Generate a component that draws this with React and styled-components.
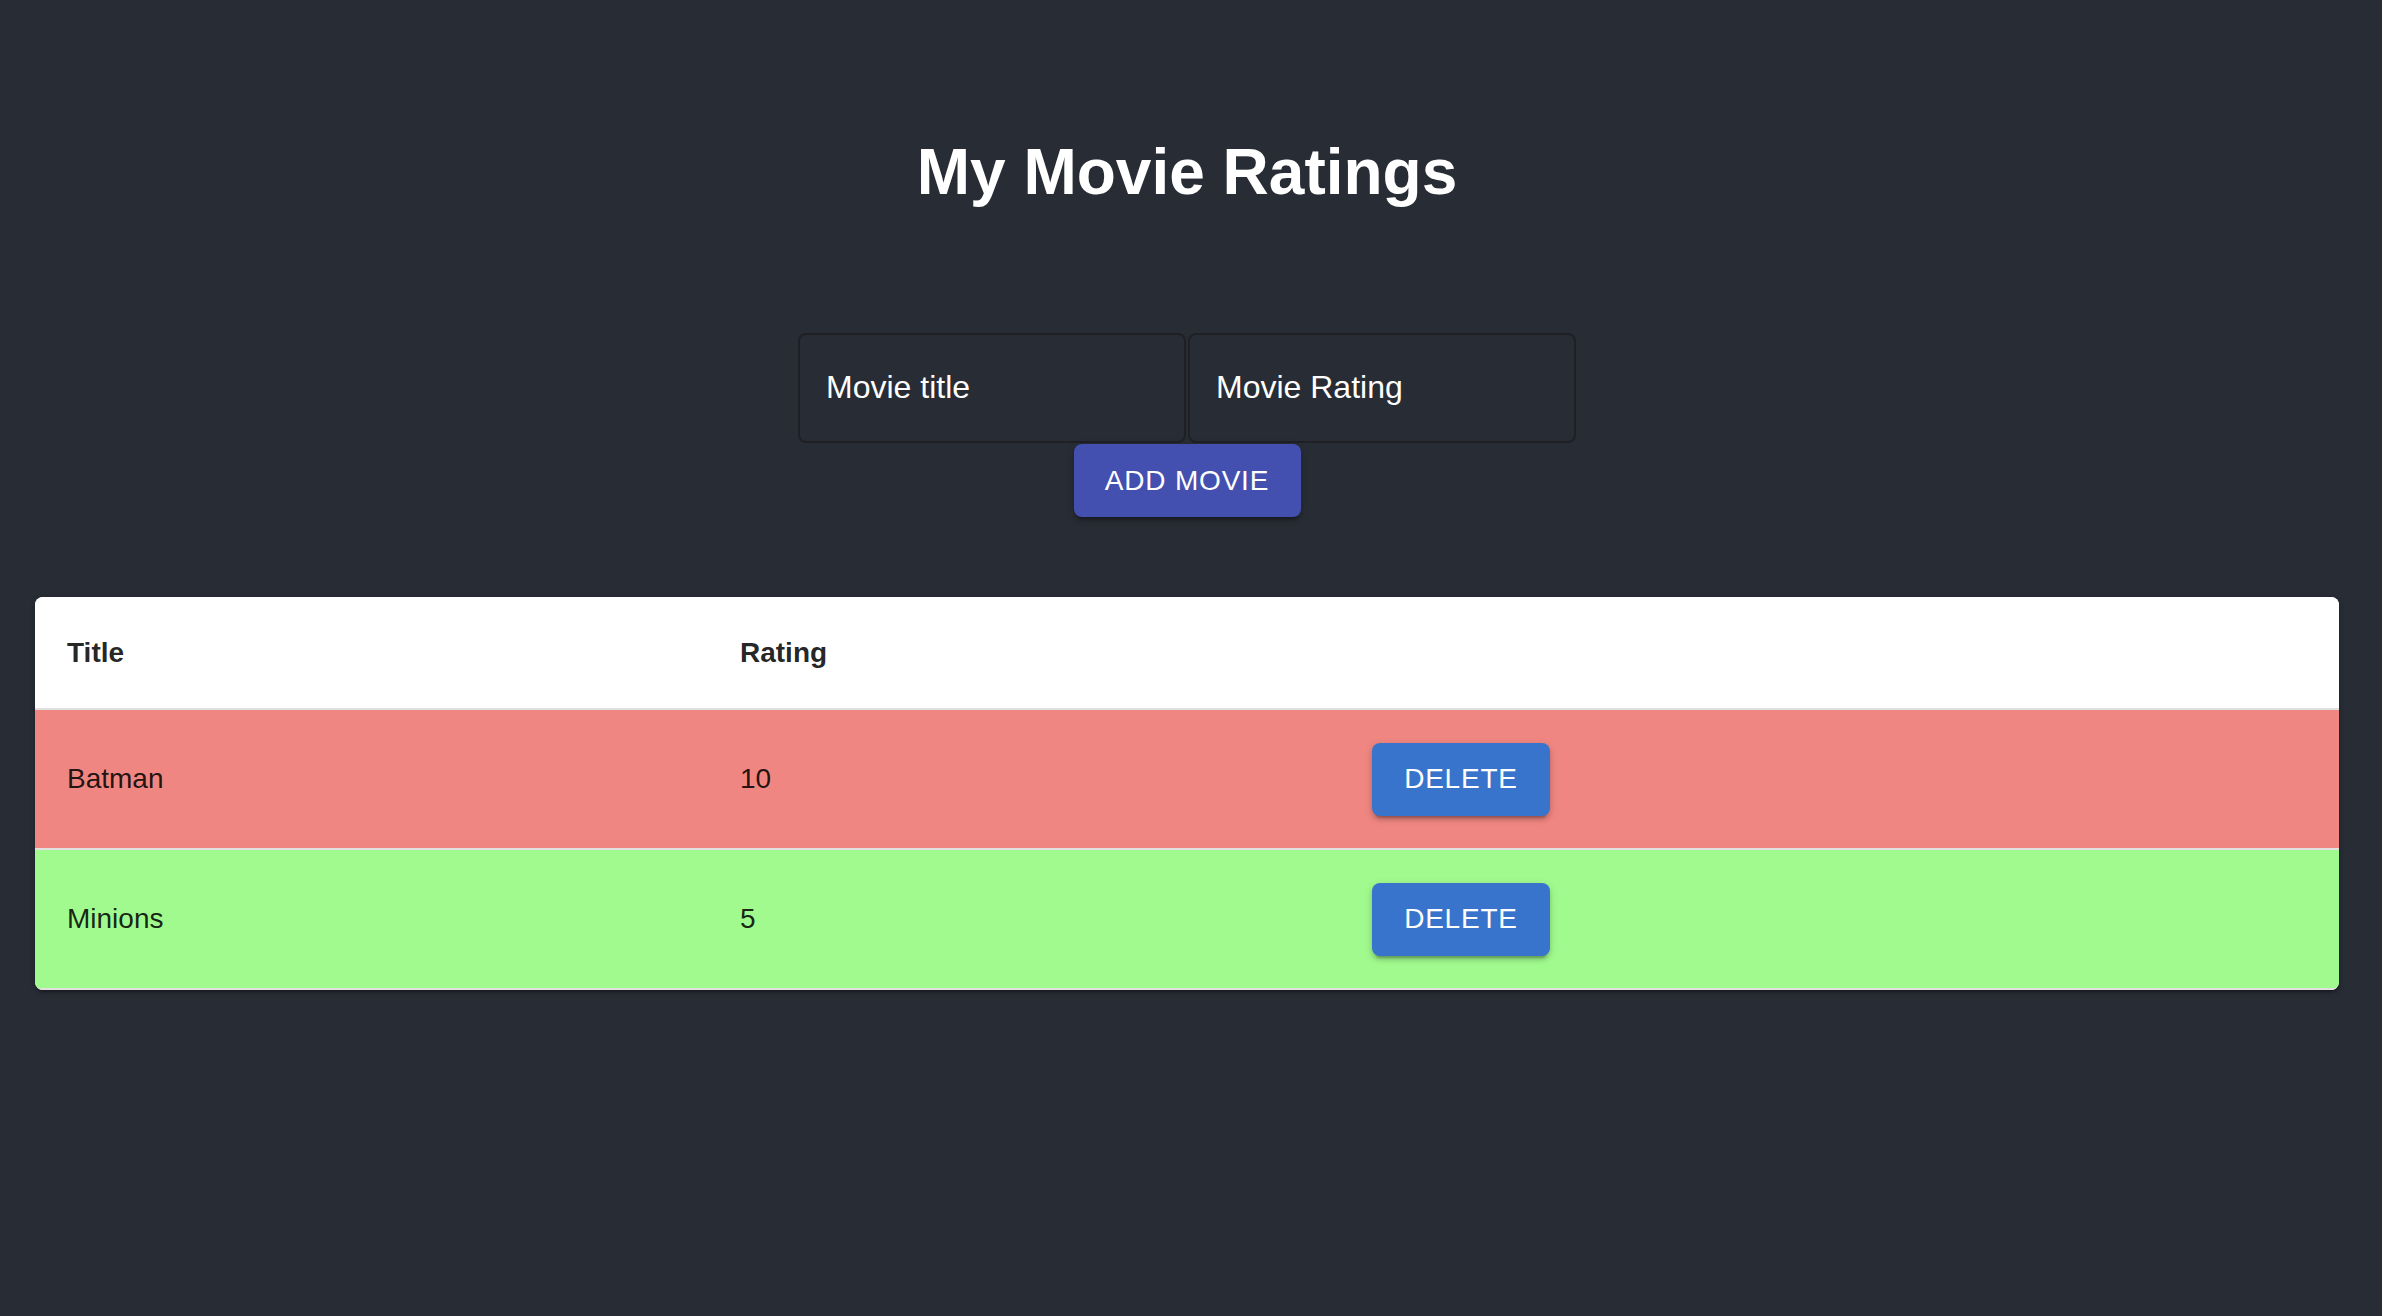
import React, {useState} from 'react';
import styled, {createGlobalStyle} from 'styled-components';

const GlobalStyle = createGlobalStyle`
body {
  margin: 0;
  background: #282c34;
  font-family: "Liberation Sans", Arial, Helvetica, sans-serif;
}
`

const Page = styled.div`
min-height: 100vh;
padding: 135px 43px 0 35px;
box-sizing: border-box;
display: flex;
flex-direction: column;
align-items: center;
`

const Heading = styled.h1`
margin: 0;
color: #ffffff;
font-size: 64px;
font-weight: 700;
line-height: 74px;
`

const Form = styled.form`
margin-top: 124px;
display: flex;
flex-direction: column;
align-items: center;
`

const Fields = styled.div`
display: flex;
gap: 2px;
`

const Field = styled.input`
width: 388px;
height: 110px;
box-sizing: border-box;
padding: 0 26px 2px;
background: transparent;
border: 2px solid #1e2026;
border-radius: 8px;
color: #ffffff;
font-family: inherit;
font-size: 32px;
outline: none;
&::placeholder {
  color: #ffffff;
  opacity: 1;
}
`

const Button = styled.button`
height: 73px;
width: ${p => p.$w}px;
margin-top: ${p => p.$mt || 0}px;
border: none;
border-radius: 8px;
background: ${p => p.$bg};
color: #ffffff;
font-family: inherit;
font-size: 28px;
letter-spacing: 0.8px;
text-transform: uppercase;
cursor: pointer;
box-shadow: 0 6px 2px -4px rgba(0,0,0,0.2), 0 4px 4px 0 rgba(0,0,0,0.14), 0 2px 10px 0 rgba(0,0,0,0.12);
`

const Paper = styled.div`
align-self: stretch;
margin-top: 80px;
background: #ffffff;
border-radius: 8px;
overflow: hidden;
box-shadow: 0 4px 2px -2px rgba(0,0,0,0.2), 0 2px 4px 0 rgba(0,0,0,0.14), 0 2px 6px 0 rgba(0,0,0,0.12);
`

const Table = styled.table`
width: 100%;
border-collapse: collapse;
table-layout: fixed;
`

const Row = styled.tr`
background: ${p => p.$bg || '#ffffff'};
`

const HeadCell = styled.th`
height: 111px;
padding: 0 32px;
text-align: left;
font-size: 28px;
font-weight: 700;
color: rgba(0,0,0,0.87);
border-bottom: 2px solid #e0e0e0;
`

const Cell = styled.td`
height: 138px;
padding: 0 32px;
font-size: 28px;
color: rgba(0,0,0,0.87);
border-bottom: 2px solid #e0e0e0;
`

const rowColor = rating => (rating > 7 ? '#ef8681' : '#a1fa8e');

export default function App() {
  const [movies, setMovies] = useState([
    {title: 'Batman', rating: 10},
    {title: 'Minions', rating: 5},
  ]);
  const [title, setTitle] = useState('');
  const [rating, setRating] = useState('');

  const addMovie = e => {
    e.preventDefault();
    if (!title || !rating) return;
    setMovies([...movies, {title, rating: Number(rating)}]);
    setTitle('');
    setRating('');
  };

  return (
    <>
      <GlobalStyle />
      <Page>
        <Heading>My Movie Ratings</Heading>
        <Form onSubmit={addMovie}>
          <Fields>
            <Field placeholder="Movie title" value={title} onChange={e => setTitle(e.target.value)} />
            <Field placeholder="Movie Rating" value={rating} onChange={e => setRating(e.target.value)} />
          </Fields>
          <Button type="submit" $w={227} $mt={1} $bg="#4350af">Add Movie</Button>
        </Form>
        <Paper>
          <Table>
            <colgroup>
              <col style={{width: '673px'}} />
              <col style={{width: '632px'}} />
              <col />
            </colgroup>
            <thead>
              <Row>
                <HeadCell>Title</HeadCell>
                <HeadCell>Rating</HeadCell>
                <HeadCell />
              </Row>
            </thead>
            <tbody>
              {movies.map((m, i) => (
                <Row key={i} $bg={rowColor(m.rating)}>
                  <Cell>{m.title}</Cell>
                  <Cell>{m.rating}</Cell>
                  <Cell>
                    <Button $w={178} $bg="#3874cb" onClick={() => setMovies(movies.filter((_, j) => j !== i))}>
                      Delete
                    </Button>
                  </Cell>
                </Row>
              ))}
            </tbody>
          </Table>
        </Paper>
      </Page>
    </>
  );
}
